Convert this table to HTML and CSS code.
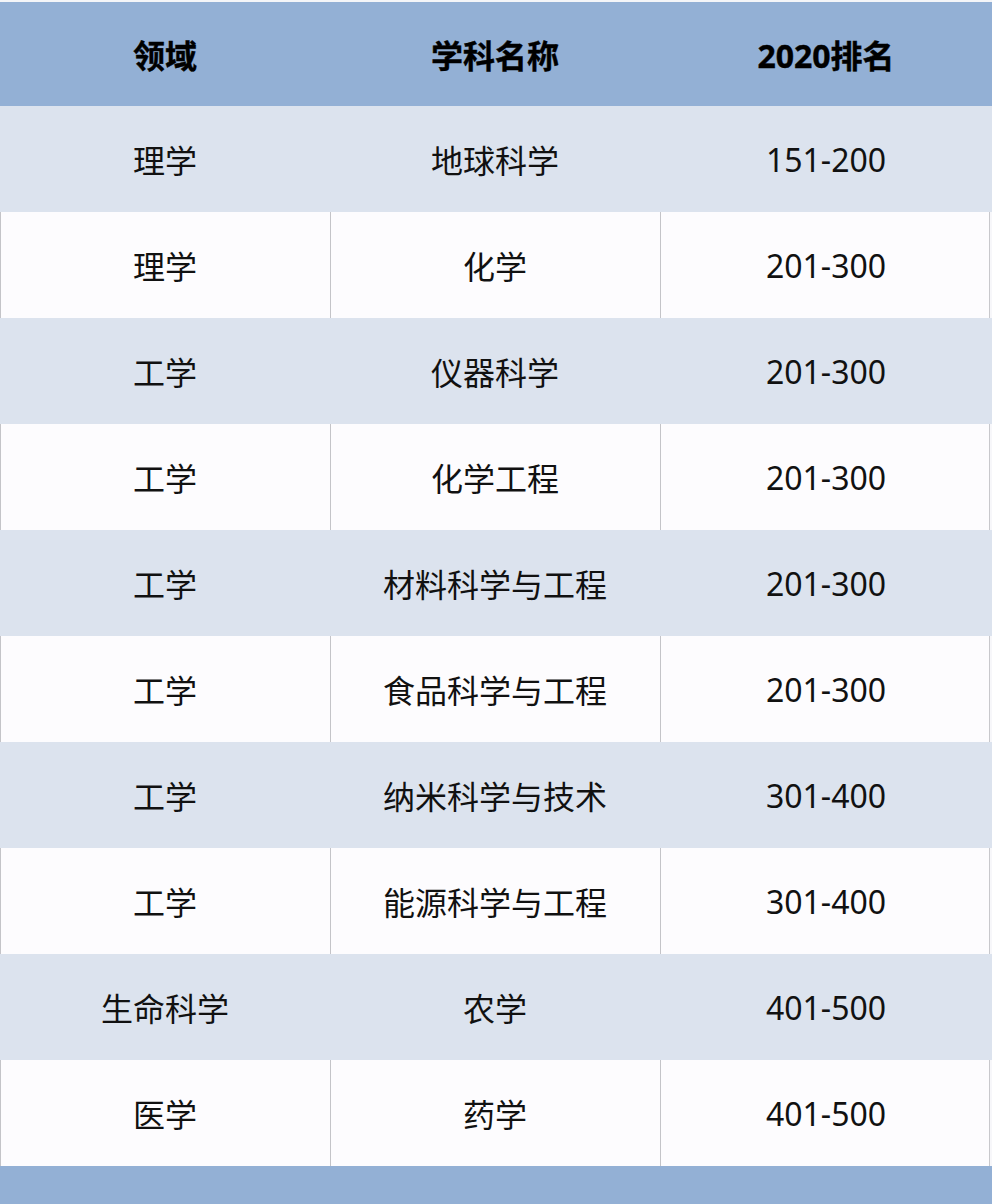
FILE: index.html
```html
<!DOCTYPE html>
<html lang="zh">
<head>
<meta charset="utf-8">
<link rel="stylesheet" href="styles.css">
</head>
<body>
<div class="table">
  <div class="row head">
    <div class="cell">领域</div>
    <div class="cell">学科名称</div>
    <div class="cell">2020排名</div>
  </div>
  <div class="row odd"><div class="cell">理学</div><div class="cell">地球科学</div><div class="cell">151-200</div></div>
  <div class="row even"><div class="cell">理学</div><div class="cell">化学</div><div class="cell">201-300</div></div>
  <div class="row odd"><div class="cell">工学</div><div class="cell">仪器科学</div><div class="cell">201-300</div></div>
  <div class="row even"><div class="cell">工学</div><div class="cell">化学工程</div><div class="cell">201-300</div></div>
  <div class="row odd"><div class="cell">工学</div><div class="cell">材料科学与工程</div><div class="cell">201-300</div></div>
  <div class="row even"><div class="cell">工学</div><div class="cell">食品科学与工程</div><div class="cell">201-300</div></div>
  <div class="row odd"><div class="cell">工学</div><div class="cell">纳米科学与技术</div><div class="cell">301-400</div></div>
  <div class="row even"><div class="cell">工学</div><div class="cell">能源科学与工程</div><div class="cell">301-400</div></div>
  <div class="row odd"><div class="cell">生命科学</div><div class="cell">农学</div><div class="cell">401-500</div></div>
  <div class="row even"><div class="cell">医学</div><div class="cell">药学</div><div class="cell">401-500</div></div>
  <div class="foot"></div>
</div>
</body>
</html>
```
FILE: styles.css
```css
html, body {
  margin: 0;
  padding: 0;
  background: #f4f5f8;
}
.table {
  width: 992px;
  display: flex;
  flex-direction: column;
  padding-top: 2px;
  font-family: "Noto Sans", "Noto Sans CJK SC", sans-serif;
  font-size: 32px;
  color: #111;
}
.row {
  display: grid;
  grid-template-columns: 330px 330px 332px;
  height: 106px;
}
.cell {
  display: flex;
  align-items: center;
  justify-content: center;
  box-sizing: border-box;
}
.head {
  height: 104px;
  background: #93b0d5;
  font-weight: 700;
  color: #000;
  -webkit-text-stroke: 0.4px #000;
}
.odd {
  background: #dce3ee;
}
.even {
  background: #fdfcfe;
  box-shadow: inset 1px 0 0 #c4c4c8, inset -2px 0 0 #f7f7fa, inset -3px 0 0 #c8c8cc;
}
.even .cell + .cell {
  box-shadow: inset 1px 0 0 #c4c4c8;
}
.foot {
  height: 38px;
  background: #93b0d5;
}
```
